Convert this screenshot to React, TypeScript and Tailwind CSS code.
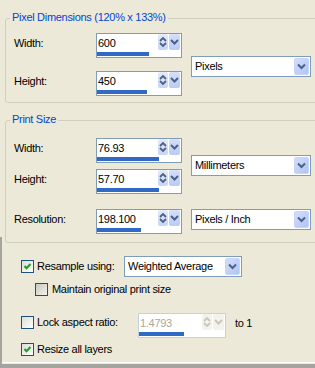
import React from "react";

const FONT = { fontFamily: '"Liberation Sans", Arial, sans-serif' };

function UpDown({ disabled }: { disabled?: boolean }) {
  const c = disabled ? "#C9C7BA" : "#4D6185";
  return (
    <div
      className={`w-[10px] h-[16px] rounded-[2px] ${
        disabled
          ? "bg-[#F3F2EC]"
          : "bg-gradient-to-b from-[#E3EBFC] to-[#C6D5F7]"
      }`}
    >
      <svg width="10" height="16" viewBox="0 0 10 16">
        <path d="M2 7 L5 4 L8 7" fill="none" stroke={c} strokeWidth="1.8" />
        <path d="M2 9 L5 12 L8 9" fill="none" stroke={c} strokeWidth="1.8" />
      </svg>
    </div>
  );
}

function Chev({ disabled, w = 11, h = 16 }: { disabled?: boolean; w?: number; h?: number }) {
  const c = disabled ? "#C9C7BA" : "#4D6185";
  const cx = w / 2;
  const cy = h / 2;
  return (
    <svg width={w} height={h} viewBox={`0 0 ${w} ${h}`}>
      <path
        d={`M${cx - 3.5} ${cy - 2} L${cx} ${cy + 1.5} L${cx + 3.5} ${cy - 2}`}
        fill="none"
        stroke={c}
        strokeWidth="2"
      />
    </svg>
  );
}

function Spin({ value, bar, disabled, cls }: { value: string; bar: number; disabled?: boolean; cls?: string }) {
  return (
    <div
      className={`${cls ?? "w-[86px]"} h-[25px] border ${
        disabled ? "border-[#C3D1E4]" : "border-[#7F9DB9]"
      } bg-white flex flex-col shrink-0`}
    >
      <div className="h-[16px] flex">
        <div
          className={`flex-1 pl-[1px] pt-[3px] leading-[13px] ${
            disabled ? "text-[#ACA899]" : "text-black"
          }`}
        >
          {value}
        </div>
        <UpDown disabled={disabled} />
        <div
          className={`w-[11px] h-[16px] ml-[1px] rounded-[2px] ${
            disabled
              ? "bg-[#F3F2EC]"
              : "bg-gradient-to-b from-[#D3DFFC] to-[#B9CCF6]"
          }`}
        >
          <Chev disabled={disabled} />
        </div>
        <div className="w-[1px]" />
      </div>
      <div className="mt-[2px] h-[4px] bg-[#316AC5]" style={{ width: bar }} />
    </div>
  );
}

function Combo({ text, cls }: { text: string; cls: string }) {
  return (
    <div className={`${cls} h-[21px] border border-[#7F9DB9] bg-white flex items-center shrink-0`}>
      <span className="flex-1 pl-[3px] leading-[13px]">{text}</span>
      <div className="w-[15px] h-[17px] mr-[1px] rounded-[2px] border border-[#C6D5FB] bg-gradient-to-br from-[#D2DEFC] to-[#B0C4F4]">
        <Chev w={13} h={15} />
      </div>
    </div>
  );
}

function Check({ checked, gray }: { checked?: boolean; gray?: boolean }) {
  return (
    <div
      className={`w-[13px] h-[13px] shrink-0 border border-[#1C5180] ${
        gray
          ? "bg-gradient-to-br from-[#C9C8C0] to-[#F4F3EE]"
          : "bg-gradient-to-br from-[#DCDCD7] to-white"
      }`}
    >
      {checked && (
        <svg width="11" height="11" viewBox="0 0 11 11">
          <path d="M2.5 5 L4.5 7.2 L8.5 3" fill="none" stroke="#21A121" strokeWidth="2.2" />
        </svg>
      )}
    </div>
  );
}

function Label({ text, w }: { text: string; w: string }) {
  return <div className={`${w} pl-[8px] pt-[4px] leading-[13px] shrink-0`}>{text}</div>;
}

export default function App() {
  return (
    <div
      className="w-[315px] h-[368px] bg-[#ECE9D8] overflow-hidden text-[11px] tracking-[-0.3px] text-black flex flex-col"
      style={FONT}
    >
      {/* Pixel Dimensions */}
      <div className="relative ml-[5px] mt-[18px] w-[320px] shrink-0 border border-[#D0D0BF] rounded-[3px] pt-[14px] pb-[6px]">
        <div className="absolute left-[4px] top-[-8px] px-[2px] bg-[#ECE9D8] text-[#0046D5] leading-[13px]">
          Pixel Dimensions (120% x 133%)
        </div>
        <div className="flex">
          <div className="flex flex-col gap-[13px]">
            <div className="flex">
              <Label text="Width:" w="w-[90px]" />
              <Spin value="600" bar={52} />
            </div>
            <div className="flex">
              <Label text="Height:" w="w-[90px]" />
              <Spin value="450" bar={50} />
            </div>
          </div>
          <div className="ml-[9px] mt-[23px]">
            <Combo text="Pixels" cls="w-[120px]" />
          </div>
        </div>
      </div>

      {/* Print Size */}
      <div className="relative ml-[5px] mt-[17px] w-[320px] shrink-0 border border-[#D0D0BF] rounded-[3px] pt-[17px] pb-[8px]">
        <div className="absolute left-[4px] top-[-8px] px-[2px] bg-[#ECE9D8] text-[#0046D5] leading-[13px]">
          Print Size
        </div>
        <div className="flex">
          <div className="flex flex-col gap-[6px]">
            <div className="flex">
              <Label text="Width:" w="w-[90px]" />
              <Spin value="76.93" bar={62} />
            </div>
            <div className="flex">
              <Label text="Height:" w="w-[90px]" />
              <Spin value="57.70" bar={62} />
            </div>
          </div>
          <div className="ml-[9px] mt-[17px]">
            <Combo text="Millimeters" cls="w-[120px]" />
          </div>
        </div>
        <div className="flex mt-[15px]">
          <Label text="Resolution:" w="w-[90px]" />
          <Spin value="198.100" bar={44} />
          <div className="ml-[9px]">
            <Combo text="Pixels / Inch" cls="w-[120px]" />
          </div>
        </div>
      </div>

      {/* Bottom options */}
      <div className="-mt-[6px] flex-1 border-l-[2px] border-[#A5A49E] pt-[18px] flex flex-col">
        <div className="flex items-center h-[22px] pl-[19px]">
          <Check checked />
          <div className="w-[90px] pl-[3px] leading-[13px]">Resample using:</div>
          <Combo text="Weighted Average" cls="w-[118px]" />
        </div>
        <div className="flex items-center h-[13px] mt-[6px] pl-[33px]">
          <Check gray />
          <div className="pl-[4px] leading-[13px]">Maintain original print size</div>
        </div>
        <div className="flex h-[25px] mt-[17px] pl-[19px]">
          <div className="mt-[3px]">
            <Check />
          </div>
          <div className="w-[104px] pl-[3px] pt-[3px] leading-[13px]">Lock aspect ratio:</div>
          <Spin value="1.4793" bar={45} disabled cls="w-[88px]" />
          <div className="ml-[9px] pt-[4px] leading-[13px]">to 1</div>
        </div>
        <div className="flex items-center h-[13px] mt-[5px] pl-[19px]">
          <Check checked />
          <div className="pl-[3px] leading-[13px]">Resize all layers</div>
        </div>
        <div className="flex-1" />
        <div className="h-[1px] bg-white" />
        <div className="h-[1px]" />
        <div className="h-[4px] bg-[#A5A49E] -ml-[2px]" />
      </div>
    </div>
  );
}
